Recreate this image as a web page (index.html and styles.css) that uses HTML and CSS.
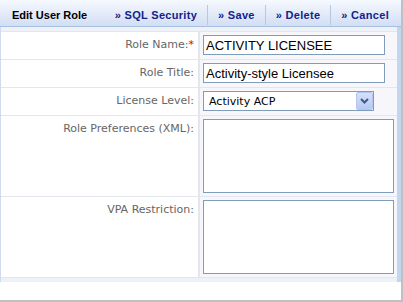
FILE: index.html
```html
<!DOCTYPE html>
<html lang="en">
<head>
    <meta charset="UTF-8">
    <title>Edit User Role</title>
    <link rel="stylesheet" href="styles.css">
</head>
<body>
    <div class="window">
        <div class="panel">
            <header class="toolbar">
                <h1>Edit User Role</h1>
                <nav class="actions">
                    <a href="#">&raquo; SQL Security</a>
                    <a href="#">&raquo; Save</a>
                    <a href="#">&raquo; Delete</a>
                    <a href="#">&raquo; Cancel</a>
                </nav>
            </header>

            <div class="panel-body">
                <table class="form">
                    <tr>
                        <td class="label">Role Name:<span class="req">*</span></td>
                        <td class="field"><input type="text" class="text-input" value="ACTIVITY LICENSEE"></td>
                    </tr>
                    <tr>
                        <td class="label">Role Title:</td>
                        <td class="field"><input type="text" class="text-input" value="Activity-style Licensee"></td>
                    </tr>
                    <tr>
                        <td class="label">License Level:</td>
                        <td class="field">
                            <div class="select-box">
                                <select class="select">
                                    <option>Activity ACP</option>
                                </select>
                                <span class="select-btn">
                                    <svg width="9" height="6" viewBox="0 0 9 6"><polyline points="1,1 4.5,4.5 8,1" fill="none" stroke="#45597e" stroke-width="2"/></svg>
                                </span>
                            </div>
                        </td>
                    </tr>
                    <tr>
                        <td class="label">Role Preferences (XML):</td>
                        <td class="field tall"><textarea class="text-area"></textarea></td>
                    </tr>
                    <tr class="last">
                        <td class="label">VPA Restriction:</td>
                        <td class="field tall"><textarea class="text-area"></textarea></td>
                    </tr>
                </table>
            </div>
        </div>
    </div>
</body>
</html>
```

FILE: styles.css
```css
* {
    margin: 0;
    padding: 0;
    box-sizing: border-box;
}

:root {
    --input-border: #7f9db9;
    --row-line: #e3e6ee;
    --strip: #eef1f8;
    --link: #13218a;
    --label: #666666;
}

body {
    background: #ffffff;
    font-family: "DejaVu Sans", Verdana, sans-serif;
    font-size: 11px;
}

.window {
    width: 403px;
    height: 302px;
    border-right: 2px solid #c0c0c0;
    border-bottom: 2px solid #c0c0c0;
}

.panel {
    width: 401px;
}

.toolbar {
    display: flex;
    align-items: flex-end;
    height: 27px;
    padding: 0 12px 1px 12px;
    background: linear-gradient(#f6f9fe, #d2def4);
    border-bottom: 1px solid #a9bfe0;
}

.toolbar h1 {
    flex: 1;
    font: bold 11px "Liberation Sans", Arial, sans-serif;
    line-height: 20px;
    color: #000000;
}

.actions {
    display: flex;
}

.actions a {
    font: bold 11px "Liberation Sans", Arial, sans-serif;
    line-height: 20px;
    color: var(--link);
    text-decoration: none;
    padding: 0 10px;
    border-left: 1px solid #b7c8e3;
    letter-spacing: 0.3px;
}

.actions a:first-child {
    border-left: none;
}

.actions a:last-child {
    padding-right: 0;
}

.panel-body {
    background: var(--strip);
    border-left: 1px solid #cfdbed;
    border-right: 4px solid #c4d5ef;
    padding: 4px 0;
}

.form {
    width: 100%;
    border-collapse: separate;
    border-spacing: 0;
}

.form td {
    border-top: 1px solid var(--row-line);
    vertical-align: top;
}

.form tr.last td {
    border-bottom: 1px solid var(--row-line);
}

.label {
    width: 200px;
    background: #ffffff;
    border-right: 2px solid var(--row-line);
    text-align: right;
    color: var(--label);
    line-height: 14px;
    padding: 6px 4px 0 0;
}

.req {
    color: #e00000;
}

.field {
    background: #f7f7fb;
    padding: 3px 3px 4px 3px;
}

.field.tall {
    padding-bottom: 3px;
}

.text-input {
    display: block;
    width: 182px;
    height: 20px;
    border: 1px solid var(--input-border);
    background: #ffffff;
    padding: 0 2px;
    font: 13px "Liberation Sans", Arial, sans-serif;
    color: #000000;
    outline: none;
}

.select-box {
    display: flex;
    align-items: center;
    width: 171px;
    height: 20px;
    border: 1px solid var(--input-border);
    background: #ffffff;
}

.select {
    flex: 1;
    appearance: none;
    -webkit-appearance: none;
    border: none;
    background: transparent;
    padding-left: 5px;
    font: 11px "DejaVu Sans", Verdana, sans-serif;
    color: #000000;
    outline: none;
}

.select-btn {
    display: flex;
    align-items: center;
    justify-content: center;
    width: 17px;
    height: 18px;
    border: 1px solid #b4c6ee;
    border-radius: 2px;
    background: linear-gradient(#d4e0fb, #b6c9f4);
}

.text-area {
    display: block;
    width: 191px;
    height: 74px;
    border: 1px solid var(--input-border);
    background: #ffffff;
    resize: none;
    outline: none;
}
```
